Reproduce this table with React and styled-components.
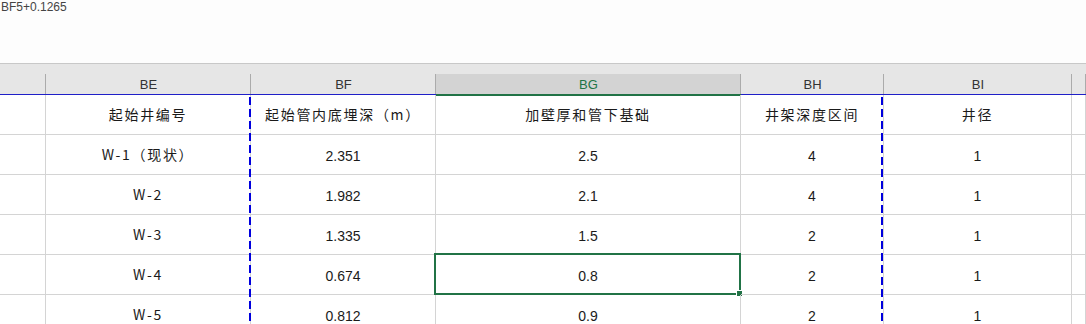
import React from "react";
import styled, { createGlobalStyle } from "styled-components";

const GlobalStyle = createGlobalStyle`
  html, body { margin: 0; padding: 0; background: #ffffff; }
  body { font-family: "Liberation Sans", "Noto Sans CJK SC", sans-serif; overflow: hidden; }
`;

const COLS = "46px 205px 185px 305px 143px 188px 1fr";
const GREEN = "#217346";
const GRID = "#d4d4d4";

const Page = styled.div`
  width: 1086px;
  height: 324px;
  overflow: hidden;
  display: flex;
  flex-direction: column;
`;

const FormulaBar = styled.div`
  height: 63px;
  flex: none;
  background: #fdfdfd;
  font-family: "Liberation Sans", sans-serif;
  font-size: 12px;
  line-height: 14px;
  color: #444;
  padding-left: 1px;
  box-sizing: border-box;
`;

const HeaderBand = styled.div`
  flex: none;
  display: grid;
  grid-template-columns: ${COLS};
  background: #e6e6e6;
  border-top: 1px solid #c8c8c8;
  padding-top: 10px;
`;

const ColHead = styled.div`
  height: 19px;
  box-sizing: content-box;
  display: flex;
  align-items: center;
  justify-content: center;
  font-family: "Liberation Sans", sans-serif;
  font-size: 13px;
  padding-top: 1px;
  color: ${(p) => (p.$active ? GREEN : "#333")};
  background: ${(p) =>
    p.$active
      ? "#d3d3d3"
      : "linear-gradient(#ababab, #ababab) right bottom / 1px 100% no-repeat, #e6e6e6"};
  border-bottom: ${(p) => (p.$active ? `2px solid ${GREEN}` : "1px solid #1f1fc8")};
  margin-bottom: ${(p) => (p.$active ? "-1px" : "0")};
  ${(p) => p.$active && `box-shadow: inset -1px 0 0 #ababab;`}
`;

const Body = styled.div`
  position: relative;
  flex: 1;
  overflow: hidden;
`;

const Row = styled.div`
  display: grid;
  grid-template-columns: ${COLS};
  height: 40px;
`;

const Cell = styled.div`
  position: relative;
  box-sizing: border-box;
  border-right: 1px solid ${GRID};
  border-bottom: 1px solid ${GRID};
  display: flex;
  align-items: center;
  justify-content: center;
  padding-top: ${(p) => (p.$text ? "0" : "2px")};
  padding-bottom: ${(p) => (p.$text ? "1px" : "0")};
  font-size: 14px;
  color: #1a1a1a;
  white-space: nowrap;
  font-family: ${(p) =>
    p.$text
      ? `"Noto Sans CJK SC", "Liberation Sans", sans-serif`
      : `"Liberation Sans", sans-serif`};
  letter-spacing: ${(p) => (p.$text ? "1.7px" : "0")};
`;

const Selection = styled.div`
  position: absolute;
  left: -2px;
  right: -1px;
  top: -2px;
  bottom: -1px;
  border: 2px solid ${GREEN};
  pointer-events: none;
`;

const FillHandle = styled.div`
  position: absolute;
  right: -3px;
  bottom: -3px;
  width: 5px;
  height: 5px;
  background: ${GREEN};
  box-shadow: 0 0 0 1px #fff;
`;

const PageBreak = styled.div`
  position: absolute;
  top: 2px;
  bottom: 0;
  width: 2px;
  background: repeating-linear-gradient(
    to bottom,
    #0000dd 0px,
    #0000dd 8px,
    transparent 8px,
    transparent 12px
  );
  pointer-events: none;
`;

const heads = ["", "BE", "BF", "BG", "BH", "BI", ""];

const rows = [
  ["", "起始井编号", "起始管内底埋深（m）", "加壁厚和管下基础", "井架深度区间", "井径", ""],
  ["", "W-1（现状）", "2.351", "2.5", "4", "1", ""],
  ["", "W-2", "1.982", "2.1", "4", "1", ""],
  ["", "W-3", "1.335", "1.5", "2", "1", ""],
  ["", "W-4", "0.674", "0.8", "2", "1", ""],
  ["", "W-5", "0.812", "0.9", "2", "1", ""],
];

const isText = (v) => /[^0-9.]/.test(v);

export default function App() {
  return (
    <>
      <GlobalStyle />
      <Page>
        <FormulaBar>BF5+0.1265</FormulaBar>
        <HeaderBand>
          {heads.map((h, i) => (
            <ColHead key={i} $active={h === "BG"}>
              {h}
            </ColHead>
          ))}
        </HeaderBand>
        <Body>
          {rows.map((r, ri) => (
            <Row key={ri}>
              {r.map((v, ci) => (
                <Cell key={ci} $text={isText(v)}>
                  {v}
                  {ri === 4 && ci === 3 && (
                    <Selection>
                      <FillHandle />
                    </Selection>
                  )}
                </Cell>
              ))}
            </Row>
          ))}
          <PageBreak style={{ left: 249 }} />
          <PageBreak style={{ left: 881 }} />
        </Body>
      </Page>
    </>
  );
}
